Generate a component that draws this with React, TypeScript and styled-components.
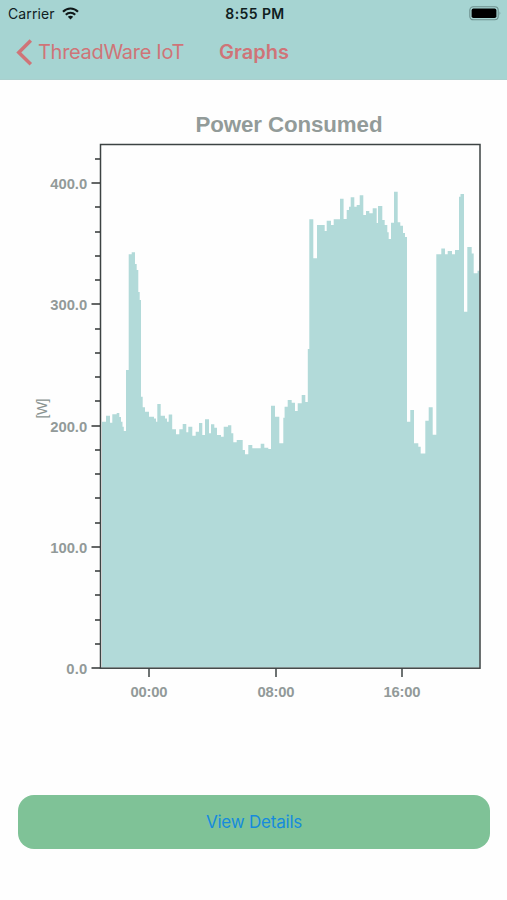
import React from "react";
import styled, { createGlobalStyle } from "styled-components";

const GlobalStyle = createGlobalStyle`
  * { box-sizing: border-box; }
  body { margin: 0; background: #fff; }
`;

const Screen = styled.div`
  width: 507px;
  height: 900px;
  display: flex;
  flex-direction: column;
  overflow: hidden;
  background: #fefefe;
  font-family: Inter, "Liberation Sans", sans-serif;
`;

const Header = styled.header`
  height: 80px;
  flex: none;
  background: #a6d4d2;
  border-bottom: 1px solid #a9cfcd;
`;

const StatusBar = styled.div`
  height: 26px;
  display: grid;
  grid-template-columns: 1fr auto 1fr;
  align-items: center;
  padding: 1px 5px 0 8px;
  color: #10201f;
`;

const Carrier = styled.div`
  display: flex;
  align-items: center;
  gap: 7px;
  font-size: 14px;
  letter-spacing: 0.1px;
`;

const Clock = styled.div`
  font-size: 14px;
  font-weight: 600;
  letter-spacing: 0.4px;
`;

const BatteryIcon = styled.svg`
  justify-self: end;
`;

const NavBar = styled.nav`
  height: 52px;
  display: flex;
  align-items: center;
  padding: 0 0 0 16px;
  color: #cf7478;
`;

const BackButton = styled.button`
  display: flex;
  align-items: center;
  gap: 5px;
  width: 203px;
  padding: 0;
  border: 0;
  background: none;
  color: inherit;
  font: 400 20px Inter, sans-serif;
  letter-spacing: -0.3px;
  white-space: nowrap;
`;

const Title = styled.h1`
  margin: 0;
  font-size: 20px;
  font-weight: 600;
  letter-spacing: 0;
`;

const ChartArea = styled.main`
  height: 715px;
  flex: none;
`;

const ChartSvg = styled.svg`
  display: block;
  font-family: "Liberation Sans", Arial, sans-serif;
`;

const ChartTitle = styled.text`
  font-size: 22.3px;
  font-weight: 700;
  fill: #929b99;
`;

const AxisLabel = styled.text`
  font-size: 14.8px;
  font-weight: 700;
  fill: #929a99;
`;

const UnitLabel = styled.text`
  font-size: 14px;
  fill: #8b9492;
`;

const Footer = styled.footer`
  padding: 0 17px 0 18px;
`;

const DetailsButton = styled.button`
  display: block;
  width: 100%;
  height: 54px;
  padding: 0;
  border: 0;
  border-radius: 16px;
  background: #7fc297;
  color: #168bdd;
  font: 400 17px Inter, sans-serif;
  letter-spacing: -0.22px;
`;

// Each sample is the left edge of a step and its top; a step lasts until the next one.
const samples: [number, number][] = [
  [102, 421.7], [106, 415.7], [110, 422.7], [112.3, 414.3], [116.7, 413], [119.3, 417],
  [121, 421.7], [122.5, 426.7], [123.8, 431], [126, 370], [128.7, 254.3], [131.7, 252.3],
  [135, 264], [136.7, 270], [138.3, 292], [139.7, 300], [141, 396.7], [142.7, 407.3],
  [145, 411.7], [149, 416.7], [154, 418.5], [156, 421.7], [157.3, 404], [160.7, 415.7],
  [165, 418.5], [167, 421.7], [168.7, 414.5], [172.2, 429.3], [176, 434.3], [179.3, 429.3],
  [182.7, 424], [186.3, 432.3], [188.3, 426.7], [192.3, 435.7], [195.7, 431.7], [199, 423],
  [202.3, 435], [205, 419.3], [209, 433.3], [211, 424.3], [214.3, 427.7], [217, 435],
  [221, 436.7], [223.7, 426.7], [228, 425.3], [231.3, 433.3], [233.3, 442.3], [236.7, 440],
  [242.7, 450], [245, 454.3], [248.3, 445], [252.3, 448.3], [260.7, 443.7], [264.3, 447.7],
  [268.3, 449], [271, 405.7], [275, 416.7], [279.3, 443.3], [283.3, 417.7], [284.6, 406.7],
  [287.7, 400], [291.7, 402.7], [295, 411], [297.7, 403.3], [301.7, 395], [305.3, 402],
  [307.8, 349], [309.3, 219.3], [313.3, 258.3], [317, 225], [324.7, 231], [326.7, 220.7],
  [331, 225], [333.7, 219.3], [340, 198.7], [343.6, 219], [346.7, 210], [349, 206.7],
  [350.7, 197.3], [354.3, 206.7], [356.7, 205], [359.7, 195.3], [363.3, 215], [366, 211],
  [369.3, 213.3], [372.7, 208.3], [376.7, 223], [378, 206], [382.3, 220], [384.7, 225],
  [387.3, 232.3], [388.7, 239], [391, 222.7], [394, 191.7], [397.7, 222.3], [400.3, 225.7],
  [403, 233], [405, 237], [407, 421.7], [410.3, 410], [414, 443.3], [418.3, 446.7],
  [420.7, 453.5], [425.3, 420.7], [428.7, 407.3], [432.7, 434.7], [436.3, 254.3],
  [441.3, 248.5], [445, 254.3], [447.7, 251], [452, 254.3], [455, 250], [459, 196.7],
  [460.5, 194], [464, 311.7], [467.3, 247], [471.7, 253.5], [473.7, 273.3], [477.5, 270.7],
];

const areaPath = "M102 667.5" + samples.map(([x, y]) => `H${x}V${y}`).join("") + "H479.5V667.5Z";

const yTop = 183.2;
const yStep = 121.2;
const yLabels = ["400.0", "300.0", "200.0", "100.0", "0.0"];
const minorTicks = Array.from({ length: 22 }, (_, i) => i)
  .filter((i) => i % 5 !== 0)
  .map((i) => Math.round(668 - (i * yStep) / 5));
const xLabels = [
  { x: 149, label: "00:00" },
  { x: 276, label: "08:00" },
  { x: 402, label: "16:00" },
];

function PowerChart() {
  return (
    <ChartSvg width="507" height="715" viewBox="0 80 507 715">
      <ChartTitle x="195.5" y="132" textLength="187">Power Consumed</ChartTitle>
      <path d={areaPath} fill="#b2dad9" />
      <rect x="100.5" y="144.5" width="379.5" height="523.7" fill="none" stroke="#3d4343" strokeWidth="1.5" />
      {minorTicks.map((y) => (
        <path key={y} d={`M95 ${y}H100`} stroke="#303535" strokeWidth="1.5" />
      ))}
      {yLabels.map((label, i) => {
        const y = Math.round(yTop + i * yStep);
        const width = label.length === 5 ? 37 : 21;
        return (
          <g key={label}>
            <path d={`M91.5 ${y}H100`} stroke="#303535" strokeWidth="1.5" />
            <AxisLabel x={87.2 - width} y={y + 5.7} textLength={width}>{label}</AxisLabel>
          </g>
        );
      })}
      {xLabels.map(({ x, label }) => (
        <g key={label}>
          <path d={`M${x} 668V677`} stroke="#3d4343" strokeWidth="1.5" />
          <AxisLabel x={x - 18.5} y="697" textLength="37">{label}</AxisLabel>
        </g>
      ))}
      <UnitLabel transform="translate(46.5 418.5) rotate(-90)" textLength="20">[W]</UnitLabel>
    </ChartSvg>
  );
}

export default function App() {
  return (
    <Screen>
      <GlobalStyle />
      <Header>
        <StatusBar>
          <Carrier>
            Carrier
            <svg width="17" height="13" viewBox="0 0 17 13" fill="none" stroke="#101818" strokeWidth="2.1">
              <path d="M1 4.8C5.2.4 11.8.4 16 4.8" />
              <path d="M3.8 7.7C6.4 5 10.6 5 13.2 7.7" />
              <path d="M5.8 9.8C7.3 8.3 9.7 8.3 11.2 9.8L8.5 12.6Z" fill="#101818" stroke="none" />
            </svg>
          </Carrier>
          <Clock>8:55 PM</Clock>
          <BatteryIcon width="33" height="15" viewBox="0 0 33 15">
            <rect x="0.8" y="0.8" width="28.4" height="13" rx="3.5" fill="none" stroke="#6d908e" strokeWidth="1.1" />
            <rect x="2.6" y="2.6" width="24.8" height="9.4" rx="1.8" fill="#000" />
            <path d="M30.6 5.2Q32.4 7.3 30.6 9.4Z" fill="#6d908e" />
          </BatteryIcon>
        </StatusBar>
        <NavBar>
          <BackButton>
            <svg width="17" height="27" viewBox="0 0 17 27" fill="none" stroke="#cf7478" strokeWidth="3.5">
              <path d="M14.8 1.6L2.8 13.4L14.8 25.2" />
            </svg>
            ThreadWare IoT
          </BackButton>
          <Title>Graphs</Title>
        </NavBar>
      </Header>
      <ChartArea>
        <PowerChart />
      </ChartArea>
      <Footer>
        <DetailsButton>View Details</DetailsButton>
      </Footer>
    </Screen>
  );
}
